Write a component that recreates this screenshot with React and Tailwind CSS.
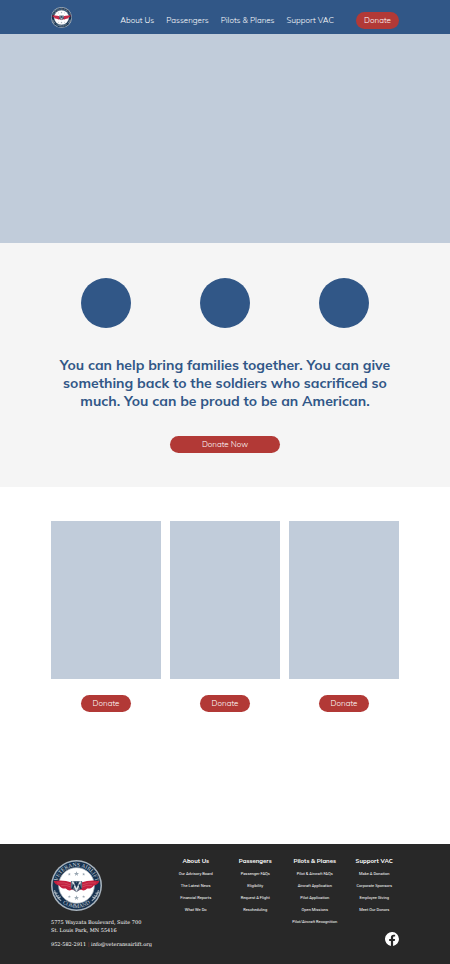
import React from "react";

const sans = "font-['Muli','Mulish','Noto_Sans',sans-serif]";
const slab = "font-['Roboto_Slab','DejaVu_Serif',serif]";

const navLinks = ["About Us", "Passengers", "Pilots & Planes", "Support VAC"];

const footerColumns = [
  { title: "About Us", links: ["Our Advisory Board", "The Latest News", "Financial Reports", "What We Do"] },
  { title: "Passengers", links: ["Passenger FAQs", "Eligibility", "Request A Flight", "Rescheduling"] },
  {
    title: "Pilots & Planes",
    links: ["Pilot & Aircraft FAQs", "Aircraft Application", "Pilot Application", "Open Missions", "Pilot/Aircraft Recognition"],
  },
  { title: "Support VAC", links: ["Make A Donation", "Corporate Sponsors", "Employee Giving", "Meet Our Donors"] },
];

const star = "M0-5 1.3-1.6 5-1.5 2.1.7 3.1 4.2 0 2.1-3.1 4.2-2.1.7-5-1.5-1.3-1.6Z";

function Seal({ id, className }) {
  return (
    <svg viewBox="0 0 100 100" className={className} role="img" aria-label="Veterans Airlift Command">
      <defs>
        <path id={`${id}-top`} d="M13 62A38.500 38.500 0 1 1 87 62" />
        <path id={`${id}-bottom`} d="M6 56A44.500 44.500 0 0 0 94 56" />
      </defs>
      <circle cx="50" cy="50" r="50" fill="#a9b4bd" />
      <circle cx="50" cy="50" r="47" fill="#17324f" />
      <circle cx="50" cy="50" r="35" fill="#fff" stroke="#a9b4bd" strokeWidth="1.5" />
      <g fill="#cbd5dc" fontFamily="Liberation Serif, serif" fontSize="11" textAnchor="middle">
        <text>
          <textPath href={`#${id}-top`} startOffset="50%">VETERANS AIRLIFT</textPath>
        </text>
        <text>
          <textPath href={`#${id}-bottom`} startOffset="50%">COMMAND</textPath>
        </text>
      </g>
      <path d="M7 59Q9 72 20 80M6 64l7 1M9 71l7-1M13 76l6-4M93 59Q91 72 80 80M94 64l-7 1M91 71l-7-1M87 76l-6-4" fill="none" stroke="#a9b4bd" strokeWidth="2" />
      <g fill="#9aa7b2">
        <path d={star} transform="translate(50 27)" />
        <path d={star} transform="translate(50 74)" />
        <path d={star} transform="translate(36 28) scale(.6)" />
        <path d={star} transform="translate(64 28) scale(.6)" />
        <path d={star} transform="translate(36 72) scale(.6)" />
        <path d={star} transform="translate(64 72) scale(.6)" />
      </g>
      <path d="M5 41Q24 38 41 44L50 48 59 44Q76 38 95 41 92 48 84 50 80 57 71 56 65 62 58 58L50 62 42 58Q35 62 29 56 20 57 16 50 8 48 5 41Z" fill="#c4203e" />
      <path d="M12 45Q27 43 39 49M20 50Q30 48 39 53M80 50Q70 48 61 53M88 45Q73 43 61 49" fill="none" stroke="#d85a70" strokeWidth="1.2" />
      <path d="M39 41h22v14L50 63 39 55Z" fill="#5c6f82" />
      <path d="M42 42l8 17 8-17" fill="none" stroke="#dce2e7" strokeWidth="3" />
      <path d="M41 57l4-9M59 57l-4-9M47 43l3 7 3-7" fill="none" stroke="#17324f" strokeWidth="3" />
    </svg>
  );
}

function DonateButton({ children, className }) {
  return (
    <button type="button" className={`h-[17px] rounded-full bg-[#b23936] text-center text-[8px] leading-[17px] font-light text-white ${className}`}>
      {children}
    </button>
  );
}

export default function App() {
  return (
    <div className={`flex min-h-screen flex-col bg-white ${sans}`}>
      <header className="flex h-[34px] items-center bg-[#315787] px-[51px] pt-[6px]">
        <Seal id="header-seal" className="mb-[6px] size-[21px] shrink-0" />
        <nav className="mr-[22px] ml-auto flex gap-3 text-[8px] leading-[17px] font-light text-white">
          {navLinks.map((label) => (
            <a key={label} href="#" className="whitespace-nowrap">{label}</a>
          ))}
        </nav>
        <DonateButton className="w-[43px]">Donate</DonateButton>
      </header>

      <main className="grow">
        <section className="h-[209px] bg-[#c1ccda]" aria-label="Featured" />

        <section className="bg-[#f5f5f5] px-[51px] pt-[35px] pb-[34px] text-center">
          <div className="grid grid-cols-3 justify-items-center gap-[9px]">
            <div className="size-[50px] rounded-full bg-[#315787]" />
            <div className="size-[50px] rounded-full bg-[#315787]" />
            <div className="size-[50px] rounded-full bg-[#315787]" />
          </div>
          <h1 className="mt-[28px] mb-[26px] text-[14px] leading-[18px] font-bold text-[#315787]">
            You can help bring families together. You can give something back to the soldiers who sacrificed so much. You can be proud to be an American.
          </h1>
          <DonateButton className="mx-auto block w-[110px]">Donate Now</DonateButton>
        </section>

        <section className="grid grid-cols-3 gap-[9px] px-[51px] pt-[34px] pb-[132px]">
          {["first", "second", "third"].map((card) => (
            <article key={card} className="flex flex-col items-center gap-4">
              <div className="h-[158px] w-full bg-[#c1ccda]" />
              <DonateButton className="w-[50px]">Donate</DonateButton>
            </article>
          ))}
        </section>
      </main>

      <footer className="flex h-[120px] bg-[#282828] px-[51px] pt-4 text-white">
        <div className={`w-[115px] shrink-0 whitespace-nowrap text-[5px] leading-[8px] ${slab}`}>
          <Seal id="footer-seal" className="mb-[7px] size-[51px]" />
          <address className="not-italic">
            5775 Wayzata Boulevard, Suite 700
            <br />
            St. Louis Park, MN 55416
          </address>
          <p className="mt-[6px]">
            <a href="tel:9525822911">952-582-2911</a> <span className="text-[#b23936]">|</span>{" "}
            <a href="mailto:info@veteransairlift.org">info@veteransairlift.org</a>
          </p>
        </div>
        <div className="-mr-[5px] flex grow flex-col">
          <div className="grid grid-cols-4">
            {footerColumns.map(({ title, links }) => (
              <div key={title} className="flex flex-col items-center whitespace-nowrap">
                <h2 className="text-[6px] leading-[3px] font-bold">{title}</h2>
                <ul className="mt-[5px] text-center font-['Roboto_Slab','Roboto',sans-serif] text-[4px] leading-[12px]">
                  {links.map((link) => (
                    <li key={link}>
                      <a href="#" className="block">{link}</a>
                    </li>
                  ))}
                </ul>
              </div>
            ))}
          </div>
          <a href="#" aria-label="Facebook" className="mt-1 mr-[5px] self-end">
            <svg viewBox="0 0 24 24" className="size-[14px]" fill="currentColor">
              <path d="M24 12a12 12 0 1 0-13.9 11.9v-8.400h-3V12h3V9.400c0-3 1.800-4.700 4.600-4.700 1.300 0 2.700.2 2.700.2v3h-1.500c-1.500 0-2 .9-2 1.900V12h3.400l-.6 3.500h-2.800v8.400A12 12 0 0 0 24 12Z" />
            </svg>
          </a>
        </div>
      </footer>
    </div>
  );
}
